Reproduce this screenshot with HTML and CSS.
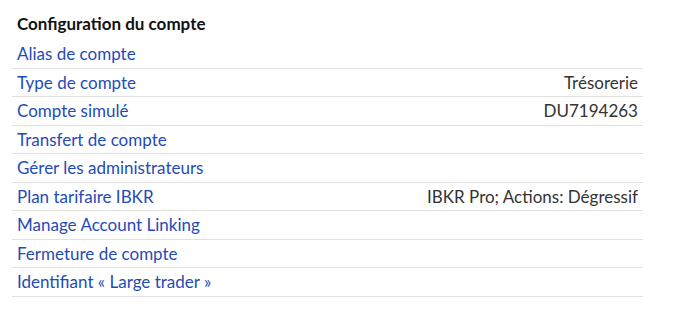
FILE: index.html
```html
<!DOCTYPE html>
<html lang="fr">
<head>
<meta charset="utf-8">
<title>Configuration du compte</title>
<link rel="stylesheet" href="styles.css">
</head>
<body>
<section class="panel">
  <h2 class="title">Configuration du compte</h2>
  <ul class="rows">
    <li class="row"><a class="label">Alias de compte</a></li>
    <li class="row"><a class="label">Type de compte</a><span class="value">Trésorerie</span></li>
    <li class="row"><a class="label">Compte simulé</a><span class="value">DU7194263</span></li>
    <li class="row"><a class="label">Transfert de compte</a></li>
    <li class="row"><a class="label">Gérer les administrateurs</a></li>
    <li class="row"><a class="label">Plan tarifaire IBKR</a><span class="value">IBKR Pro; Actions: Dégressif</span></li>
    <li class="row"><a class="label">Manage Account Linking</a></li>
    <li class="row"><a class="label">Fermeture de compte</a></li>
    <li class="row"><a class="label">Identifiant « Large trader »</a></li>
  </ul>
</section>
</body>
</html>
```
FILE: styles.css
```css
html, body {
  margin: 0;
  padding: 0;
  background: #ffffff;
}
body {
  font-family: "Lato", "Liberation Sans", sans-serif;
  font-size: 17px;
  color: #333333;
}
.panel {
  width: 631px;
  margin-left: 12px;
  padding-top: 12px;
}
.title {
  margin: 0;
  padding-left: 5px;
  font-size: 17px;
  font-weight: 700;
  color: #111111;
  line-height: 24px;
  height: 28px;
}
.rows {
  list-style: none;
  margin: 0;
  padding: 0;
}
.row {
  display: flex;
  justify-content: space-between;
  align-items: center;
  height: 27.5px;
  padding: 0 5px;
  border-bottom: 1px solid #e1e1e1;
}
.label {
  color: #1f4bb9;
  text-decoration: none;
}
.value {
  color: #333333;
}
```
